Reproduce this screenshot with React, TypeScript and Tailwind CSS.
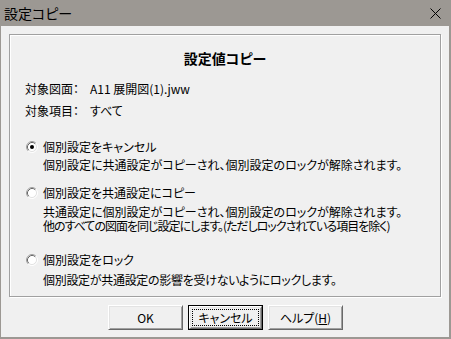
import React from "react";

const font = "font-['Noto_Sans_CJK_JP','Noto_Sans',sans-serif] [font-feature-settings:'palt']";

function Radio({ checked }: { checked?: boolean }) {
  return (
    <svg width="12" height="12" viewBox="0 0 12 12" className="shrink-0">
      <circle cx="6" cy="6" r="4.5" fill="#fff" />
      <path d="M2.11 9.89 A5.5 5.5 0 0 1 9.89 2.11" fill="none" stroke="#a0a0a0" strokeWidth="1" />
      <path d="M9.89 2.11 A5.5 5.5 0 0 1 2.11 9.89" fill="none" stroke="#ffffff" strokeWidth="1" />
      <path d="M2.82 9.18 A4.5 4.5 0 0 1 9.18 2.82" fill="none" stroke="#696969" strokeWidth="1" />
      <path d="M9.18 2.82 A4.5 4.5 0 0 1 2.82 9.18" fill="none" stroke="#e3e3e3" strokeWidth="1" />
      {checked && <circle cx="6" cy="6" r="2" fill="#000" />}
    </svg>
  );
}

function Btn({ children, def }: { children: React.ReactNode; def?: boolean }) {
  if (def) {
    return (
      <div className="w-[75px] h-[25px] border border-black bg-[#f0f0f0]">
        <div className="w-full h-full border border-t-white border-l-white border-r-[#696969] border-b-[#696969] shadow-[inset_1px_1px_0_#e3e3e3,inset_-1px_-1px_0_#a0a0a0] p-[2px]">
          <div className="w-full h-full border border-dotted border-black flex items-center justify-center text-[12px] leading-[14px] text-black">
            {children}
          </div>
        </div>
      </div>
    );
  }
  return (
    <div className="w-[75px] h-[25px] border border-t-white border-l-white border-r-[#696969] border-b-[#696969] shadow-[inset_1px_1px_0_#e3e3e3,inset_-1px_-1px_0_#a0a0a0] bg-[#f0f0f0] flex items-center justify-center text-[12px] leading-[14px] text-black">
      {children}
    </div>
  );
}

export default function App() {
  return (
    <div className={`w-[451px] h-[339px] flex flex-col bg-[#f0f0f0] text-black ${font}`}>
      <div className="h-[26px] bg-[#9c9893] flex items-center justify-between shrink-0">
        <span className="pl-[4px] text-[14px] leading-[16px] text-black">設定コピー</span>
        <svg width="11" height="11" viewBox="0 0 11 11" className="mr-[10px]">
          <path d="M0.5 0.5 L10.5 10.5 M10.5 0.5 L0.5 10.5" stroke="#000" strokeWidth="1" />
        </svg>
      </div>
      <div className="flex-1 border-l border-r-2 border-b-2 border-[#9c9893] flex flex-col">
        <div className="mt-[8px] ml-[8px] w-[432px] h-[263px] border border-[#a0a0a0] shadow-[inset_1px_1px_0_#fff,1px_1px_0_#fff] flex flex-col">
          <div className="mt-[15px] h-[16px] leading-[16px] text-[14px] font-bold text-center">設定値コピー</div>
          <div className="mt-[15px] h-[16px] leading-[16px] text-[12px] pl-[15px] flex">
            <span className="w-[65px]">対象図面：</span>
            <span>A11 展開図(1).jww</span>
          </div>
          <div className="mt-[6px] h-[16px] leading-[16px] text-[12px] pl-[15px] flex">
            <span className="w-[65px]">対象項目：</span>
            <span>すべて</span>
          </div>
          <div className="mt-[20px] h-[16px] leading-[16px] text-[12px] pl-[16px] flex items-center gap-[5px]">
            <Radio checked />
            <span>個別設定をキャンセル</span>
          </div>
          <div className="mt-[2px] h-[16px] leading-[16px] text-[12px] pl-[33px]">
            個別設定に共通設定がコピーされ、個別設定のロックが解除されます。
          </div>
          <div className="mt-[12px] h-[16px] leading-[16px] text-[12px] pl-[16px] flex items-center gap-[5px]">
            <Radio />
            <span>個別設定を共通設定にコピー</span>
          </div>
          <div className="mt-[4px] leading-[14px] text-[12px] pl-[33px]">
            <div>共通設定に個別設定がコピーされ、個別設定のロックが解除されます。</div>
            <div className="tracking-[-1px]">他のすべての図面を同じ設定にします。(ただしロックされている項目を除く)</div>
          </div>
          <div className="mt-[19px] h-[16px] leading-[16px] text-[12px] pl-[16px] flex items-center gap-[5px]">
            <Radio />
            <span>個別設定をロック</span>
          </div>
          <div className="mt-[4px] h-[16px] leading-[16px] text-[12px] pl-[33px] tracking-[-0.3px]">
            個別設定が共通設定の影響を受けないようにロックします。
          </div>
        </div>
        <div className="mt-[8px] ml-[107px] flex gap-[5px]">
          <Btn>OK</Btn>
          <Btn def>キャンセル</Btn>
          <Btn>
            <span>ヘルプ(<span className="underline">H</span>)</span>
          </Btn>
        </div>
      </div>
    </div>
  );
}
